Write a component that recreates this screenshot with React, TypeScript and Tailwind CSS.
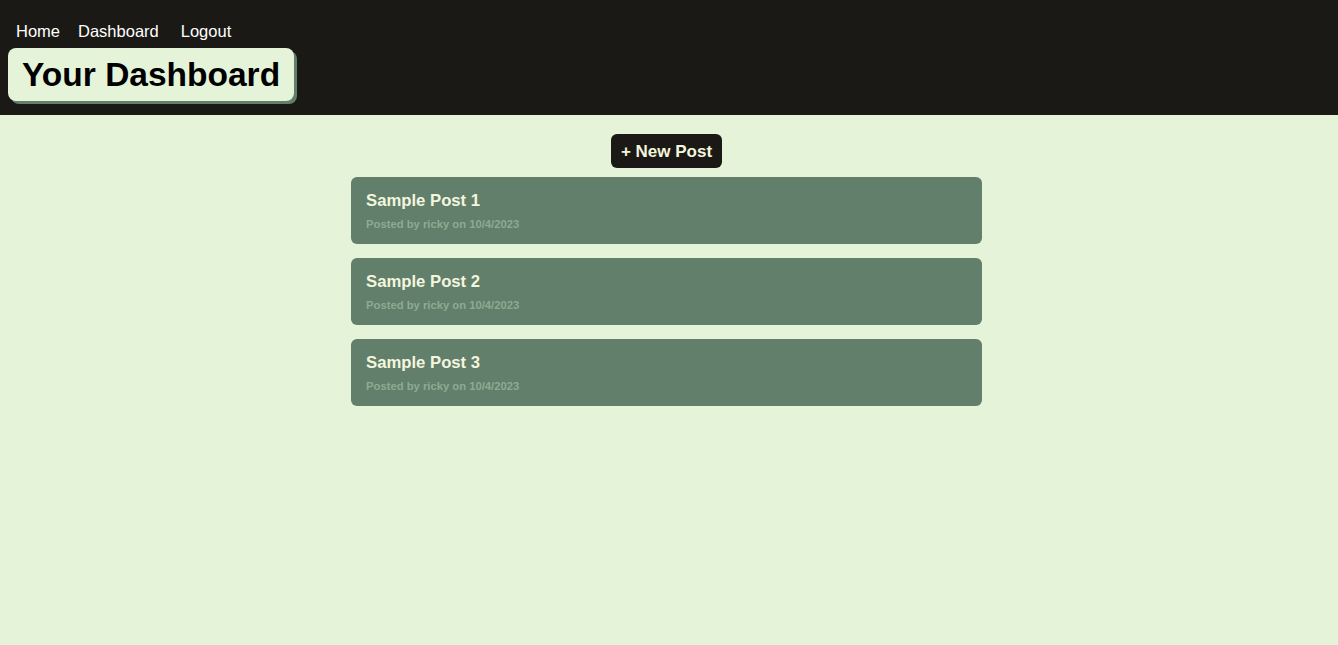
export default function App() {
  const posts = [
    { title: "Sample Post 1", author: "ricky", date: "10/4/2023" },
    { title: "Sample Post 2", author: "ricky", date: "10/4/2023" },
    { title: "Sample Post 3", author: "ricky", date: "10/4/2023" },
  ];

  return (
    <div className="min-h-screen bg-[#e5f3d8] font-['Liberation_Sans',Arial,sans-serif]">
      <header className="h-[115px] bg-[#1b1915] px-2 pt-[21px]">
        <nav className="flex pl-2 text-[16.5px] leading-5 text-white">
          <a href="#" className="mr-[18px]">Home</a>
          <a href="#" className="mr-[22px]">Dashboard</a>
          <a href="#">Logout</a>
        </nav>
        <div className="mt-[7px] inline-block rounded-lg bg-[#e5f3d8] px-[14px] py-[6px] shadow-[3px_3px_0_#60806b]">
          <h1 className="text-[33.5px] font-bold leading-[41px] text-black">Your Dashboard</h1>
        </div>
      </header>

      <main className="flex flex-col items-center pr-[5px] pt-[19px]">
        <button className="h-[34px] rounded-md bg-[#1b1915] px-[10px] pt-[1px] text-[17px] font-bold text-[#f3f6de]">
          + New Post
        </button>
        <div className="mt-[9px] flex w-[631px] flex-col gap-[14px]">
          {posts.map((p) => (
            <div key={p.title} className="h-[67px] rounded-md bg-[#617f6b] px-[15px] pt-[14px]">
              <h2 className="text-[16.7px] font-bold leading-5 text-[#f3f6de]">{p.title}</h2>
              <p className="mt-[7px] text-[11.25px] font-bold leading-[13px] text-[#8faa92]">
                Posted by {p.author} on {p.date}
              </p>
            </div>
          ))}
        </div>
      </main>
    </div>
  );
}
